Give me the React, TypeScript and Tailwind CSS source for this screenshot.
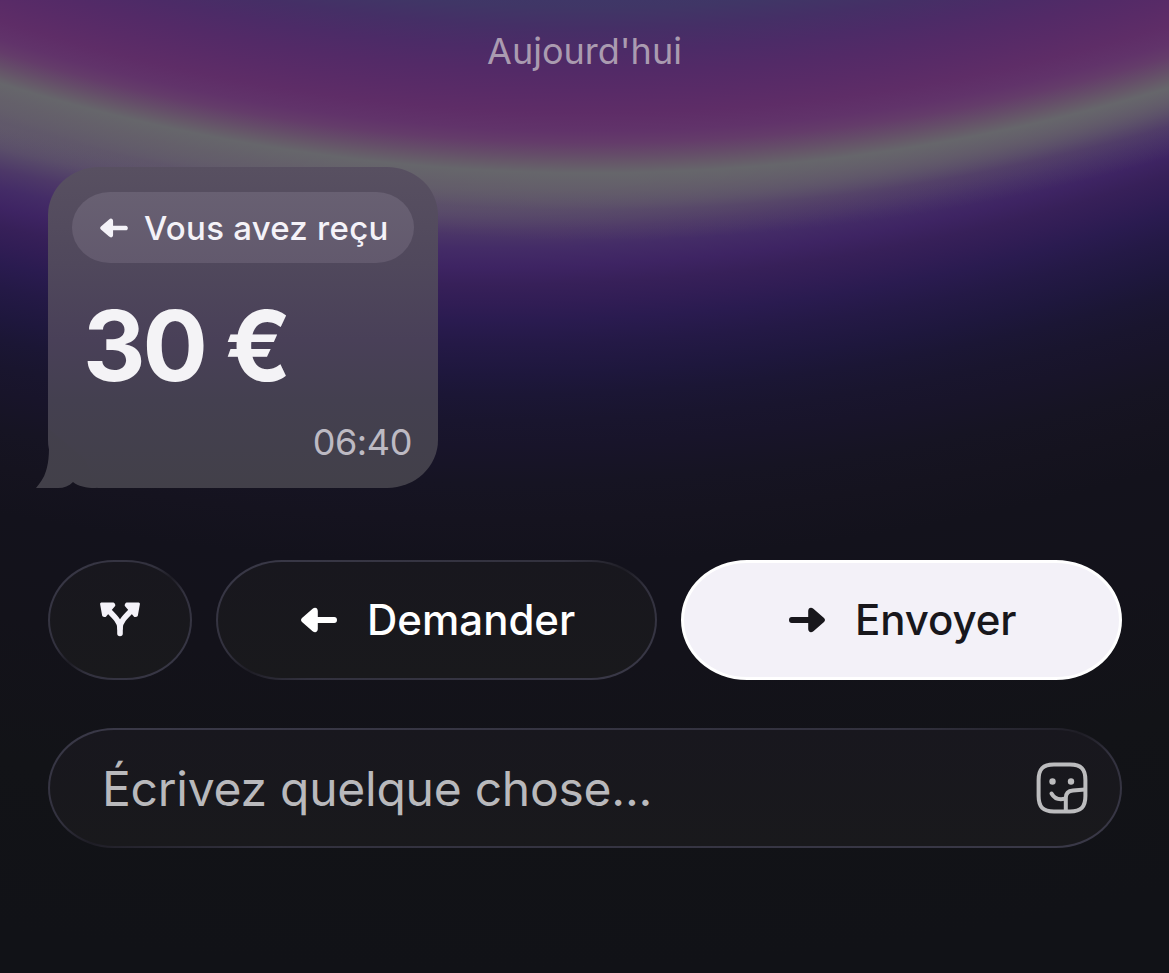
import type { ReactNode } from "react";

function ArrowIcon({ className, flip = false }: { className: string; flip?: boolean }) {
  return (
    <svg viewBox="0 0 36 26" className={className} fill="currentColor" aria-hidden="true">
      <path
        transform={flip ? "matrix(-1 0 0 1 36 0)" : undefined}
        d="M1 11 L11.600 1.800 C14 -.3 16.800 1 16.800 4 V10 H33.2 C35 10 36 11.3 36 13 S35 16 33.2 16 H16.800 V22 C16.800 25 14 26.300 11.600 24.200 L1 15 C-.3 13.8 -.3 12.2 1 11Z"
      />
    </svg>
  );
}

function SplitIcon() {
  return (
    <svg viewBox="0 0 40 36" className="h-9 w-10" aria-hidden="true">
      <g fill="none" stroke="#f4f2f9" strokeWidth="5.6" strokeLinecap="round">
        <path d="M20 31.5V26C20 20 15 15 8.500 8.500" />
        <path d="M20 26C20 20 25 15 31.500 8.500" />
      </g>
      <path
        d="M1.600 2H13.200L13.800 3.200L5 13.500L3.600 13.200Z M38.400 2H26.800L26.200 3.200L35 13.500L36.400 13.200Z"
        fill="#f4f2f9"
        stroke="#f4f2f9"
        strokeWidth="3"
        strokeLinejoin="round"
      />
    </svg>
  );
}

function StickerIcon() {
  return (
    <svg viewBox="0 0 52 52" className="size-[52px]" fill="none" aria-hidden="true">
      <g stroke="#bcbcbe" strokeWidth="4" strokeLinecap="round">
        <path d="M18 2.600H34C45 2.600 49.400 7 49.400 18V34C49.400 45 45 49.400 34 49.400H18C7 49.400 2.600 45 2.600 34V18C2.600 7 7 2.600 18 2.600Z" />
        <path d="M49 27.600L37 28.600C32.200 29 29.800 31.400 29.800 36V49" />
        <path d="M15.500 31.500C18 36 23 38 28.500 36.800" />
      </g>
      <circle cx="16.500" cy="19.500" r="3.200" fill="#bcbcbe" />
      <circle cx="35" cy="19.500" r="3.200" fill="#bcbcbe" />
    </svg>
  );
}

function GlassPill({ className, children }: { className: string; children: ReactNode }) {
  return (
    <div
      className={`h-[120px] rounded-[66px/60px] bg-[linear-gradient(to_bottom_right,#3a3948_0%,#32313e_40%,#1e1d25_50%,#32313e_60%,#3a3948_100%)] p-[2px] ${className}`}
    >
      <div className="flex h-full w-full items-center rounded-[64px/58px] bg-linear-to-b from-[#18171e] to-[#19191c]">
        {children}
      </div>
    </div>
  );
}

function Bubble() {
  return (
    <div className="relative ml-12 h-[321px] w-[390px] rounded-[51px/48px] bg-[linear-gradient(to_bottom,#585061_0px,#50485c_96px,#494058_173px,#444050_233px,#424049_321px)] px-6 pt-[25px]">
      <svg viewBox="0 0 64 64" className="absolute bottom-0 -left-3 size-16" aria-hidden="true">
        <defs>
          <linearGradient id="tail" x1="0" y1="0" x2="0" y2="1">
            <stop offset="0" stopColor="#43404c" />
            <stop offset="1" stopColor="#424049" />
          </linearGradient>
        </defs>
        <path
          d="M12 4 C14 25 13 38 10 47 C8 54 4 59 0 64 H22 C28 64 33 62 37 58 C42 62 50 64 60 64 L50 36Z"
          fill="url(#tail)"
        />
      </svg>
      <div className="flex h-[71px] w-[342px] items-center rounded-[38px/35.5px] bg-linear-to-b from-[#686072] to-[#62596d] pl-7 text-[#f4f2f8]">
        <ArrowIcon className="h-5 w-7" />
        <span className="ml-4 pt-0.5 text-[33px] leading-none font-medium tracking-[0.25px] whitespace-nowrap">
          Vous avez reçu
        </span>
      </div>
      <div className="mt-[34px] pl-[11px] text-[97px] leading-[98px] font-bold tracking-[-3px] whitespace-nowrap text-[#f4f3f6]">
        30 €
      </div>
      <div className="mt-[28px] pr-0.5 text-right text-[36px] leading-[38px] tracking-[-0.4px] text-[#bdbac3]">
        06:40
      </div>
    </div>
  );
}

export default function App() {
  return (
    <main className="h-[973px] w-[1169px] overflow-hidden bg-[radial-gradient(circle_3000px_at_592px_-1828px,#3f3767_1828px,#403666_1836px,#452f66_1856px,#4c2b67_1878px,#532a67_1900px,#592b67_1922px,#5e2d67_1941px,#61336a_1959px,#643c6a_1971px,#654c69_1983px,#665969_1992px,#66666b_2001px,#645f6ad0_2016px,#5c4d6966_2038px,#4c336500_2068px),radial-gradient(circle_3000px_at_495px_-1835px,#66666b_2000px,#635f6b_2022px,#5a4e6a_2044px,#4d3868_2065px,#442c67_2083px,#3e2463_2102px,#372059_2120px,#311d55_2138px,#2a1b50_2156px,#241946_2180px,#1e173d_2209px,#1b1635_2230px,#19152e_2256px,#18142a_2281px,#161423_2317px,#15131f_2355px,#13121c_2400px,#13121a_2500px,#121317_2640px,#111217_2808px)] font-['Inter',sans-serif]">
      <div className="flex h-[167px] justify-center pt-[29px] text-[36px] leading-[44px] text-[#aa9bb0]">
        Aujourd'hui
      </div>
      <Bubble />
      <div className="mt-[72px] flex gap-6 pl-12">
        <GlassPill className="w-36">
          <div className="flex w-full justify-center">
            <SplitIcon />
          </div>
        </GlassPill>
        <GlassPill className="w-[441px]">
          <div className="flex w-full items-center pl-[83px] text-white">
            <ArrowIcon className="h-[26px] w-9" />
            <span className="ml-[30px] text-[42px] leading-none font-medium">Demander</span>
          </div>
        </GlassPill>
        <div className="flex h-[120px] w-[441px] items-center rounded-[66px/60px] border-[3px] border-white bg-[#f3f1f8] pl-[105px] text-[#18171c]">
          <ArrowIcon className="h-[26px] w-9" flip />
          <span className="ml-[30px] text-[42px] leading-none font-medium tracking-[-0.1px]">Envoyer</span>
        </div>
      </div>
      <div className="mt-12 pl-12">
        <GlassPill className="w-[1074px]">
          <div className="flex w-full items-center justify-between pr-8 pl-[52px]">
            <span className="pt-0.5 text-[48px] leading-[50px] tracking-[-0.25px] text-[#b9b9bc]">
              Écrivez quelque chose...
            </span>
            <StickerIcon />
          </div>
        </GlassPill>
      </div>
    </main>
  );
}
